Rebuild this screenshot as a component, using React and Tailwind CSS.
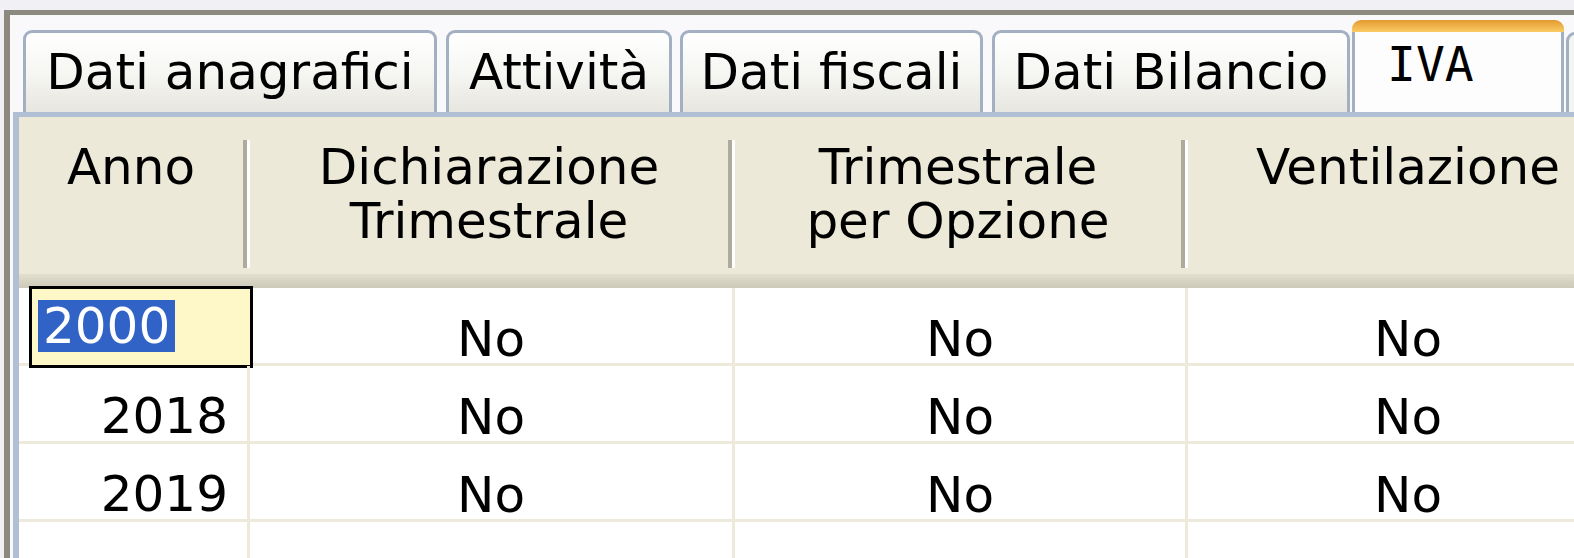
import React from "react";

const tabs = [
  { label: "Dati anagrafici", cls: "w-[414px] ml-0" },
  { label: "Attività", cls: "w-[226px] ml-[9px]" },
  { label: "Dati fiscali", cls: "w-[303px] ml-[8px]" },
  { label: "Dati Bilancio", cls: "w-[358px] ml-[9px]" },
];

const columns = [
  { lines: ["Anno"], cls: "w-[231px]" },
  { lines: ["Dichiarazione", "Trimestrale"], cls: "w-[485px]" },
  { lines: ["Trimestrale", "per Opzione"], cls: "w-[453px]" },
  { lines: ["Ventilazione"], cls: "w-[440px]" },
];

const rows = [
  { anno: "2000", selected: true, vals: ["No", "No", "No"] },
  { anno: "2018", vals: ["No", "No", "No"] },
  { anno: "2019", vals: ["No", "No", "No"] },
  { anno: "", vals: ["", "", ""] },
];

function Tab({ label, cls }) {
  return (
    <div
      className={`${cls} h-[82px] shrink-0 rounded-t-[9px] border-[3px] border-b-0 border-[#a3b0c2] bg-gradient-to-b from-[#ffffff] via-[#f6f6f3] to-[#e7e6df] pt-[13px] text-center`}
    >
      {label}
    </div>
  );
}

function ActiveTab() {
  return (
    <div className="ml-[2px] h-[92px] w-[212px] shrink-0 flex flex-col">
      <div className="h-[12px] rounded-t-[9px] bg-gradient-to-b from-[#e29a2e] to-[#fccb64]" />
      <div className="flex-1 border-x-[3px] border-[#a3b0c2] bg-[#fdfdfe] pl-[32px] pt-[6px] font-['DejaVu_Sans_Mono'] text-[48px]">
        IVA
      </div>
    </div>
  );
}

export default function App() {
  return (
    <div className="h-[558px] w-[1574px] overflow-hidden bg-[#f1f1f5] pl-[4px] pt-[10px] font-['DejaVu_Sans',sans-serif] text-[50px] leading-[52px] text-black">
      <div className="h-full border-l-[6px] border-t-[5px] border-[#8c8a7e] bg-[#f9f9fb]">
        {/* tab strip */}
        <div className="flex h-[97px] items-end pl-[13px]">
          {tabs.map((t) => (
            <Tab key={t.label} {...t} />
          ))}
          <ActiveTab />
          <div className="ml-[2px] h-[80px] w-[60px] shrink-0 rounded-t-[9px] border-[3px] border-b-0 border-[#a3b0c2] bg-[#f4f4f1]" />
        </div>

        {/* panel */}
        <div className="ml-[3px] h-full border-l-[6px] border-t-[5px] border-[#b1bfd4] bg-white">
          {/* header */}
          <div className="flex h-[171px] flex-col bg-[#ece9d8]">
            <div className="flex h-[157px]">
              {columns.map((c, i) => (
                <div key={i} className={`${c.cls} flex shrink-0`}>
                  <div className="flex-1 pt-[23px] text-center leading-[54px]">
                    {c.lines.map((l) => (
                      <div key={l}>{l}</div>
                    ))}
                  </div>
                  {i < 3 && (
                    <div className="mt-[23px] h-[128px] w-[7px] border-l-[4px] border-[#aeab9c] bg-white" />
                  )}
                </div>
              ))}
            </div>
            <div className="h-[14px] bg-gradient-to-b from-[#e2dfcf] to-[#cdc9b9]" />
          </div>

          {/* rows */}
          {rows.map((r, ri) => (
            <div key={ri} className="flex h-[78px] border-b-[3px] border-[#eeeadb]">
              <div className="relative w-[231px] shrink-0 border-r-[3px] border-[#eeeadb] pr-[19px] pt-[24px] text-right">
                {r.selected ? (
                  <div className="absolute left-[10px] top-[-2px] h-[82px] w-[224px] border-[3px] border-black bg-[#fef8c9] pl-[6px] pt-[11px] text-left">
                    <span className="inline-block bg-[#3163c6] px-[5px] text-white">{r.anno}</span>
                  </div>
                ) : (
                  r.anno
                )}
              </div>
              <div className="w-[485px] shrink-0 border-r-[3px] border-[#eeeadb] pt-[25px] text-center">
                {r.vals[0]}
              </div>
              <div className="w-[453px] shrink-0 border-r-[3px] border-[#eeeadb] pt-[25px] text-center">
                {r.vals[1]}
              </div>
              <div className="w-[440px] shrink-0 pt-[25px] text-center">{r.vals[2]}</div>
            </div>
          ))}
        </div>
      </div>
    </div>
  );
}
